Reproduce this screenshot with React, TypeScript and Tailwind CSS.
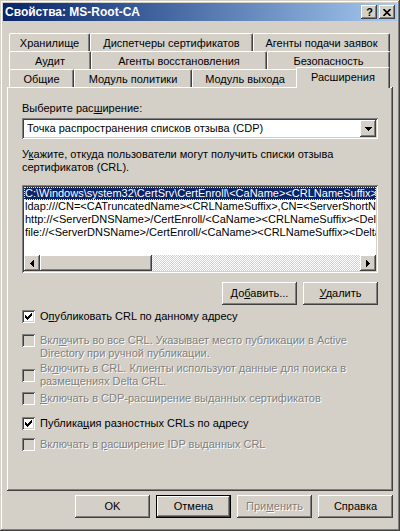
const raised =
  "shadow-[inset_-1px_-1px_0_#404040,inset_1px_1px_0_#ffffff,inset_-2px_-2px_0_#808080,inset_2px_2px_0_#d4d0c8]";
const sunken =
  "shadow-[inset_1px_1px_0_#808080,inset_-1px_-1px_0_#ffffff,inset_2px_2px_0_#404040,inset_-2px_-2px_0_#d4d0c8]";
const disabledText = "text-[#808080] [text-shadow:1px_1px_0_#ffffff]";

function CheckMark() {
  // classic 7x7 check glyph, column by column
  const tops = [2, 3, 4, 3, 2, 1, 0];
  return (
    <svg width="7" height="7" viewBox="0 0 7 7" shapeRendering="crispEdges">
      {tops.map((t, i) => (
        <rect key={i} x={i} y={t} width="1" height="3" fill="#000" />
      ))}
    </svg>
  );
}

function Check({ checked, disabled }: { checked?: boolean; disabled?: boolean }) {
  return (
    <div
      className={`w-[13px] h-[13px] shrink-0 flex items-center justify-center ${sunken} ${
        disabled ? "bg-[#d4d0c8]" : "bg-white"
      }`}
    >
      {checked && <CheckMark />}
    </div>
  );
}

function Button({
  children,
  isDefault,
  disabled,
}: {
  children: React.ReactNode;
  isDefault?: boolean;
  disabled?: boolean;
}) {
  const bevel = isDefault
    ? "shadow-[inset_-1px_-1px_0_#000000,inset_1px_1px_0_#000000,inset_-2px_-2px_0_#404040,inset_2px_2px_0_#ffffff,inset_-3px_-3px_0_#808080]"
    : raised;
  return (
    <div
      className={`w-[75px] h-[23px] flex items-center justify-center bg-[#d4d0c8] ${bevel} ${
        disabled ? disabledText : ""
      }`}
    >
      <span>{children}</span>
    </div>
  );
}

function Tab({ label, w }: { label: string; w: string }) {
  return (
    <div
      className={`${w} h-[18px] shrink-0 border-t border-l border-white border-r border-r-[#404040] rounded-t-[2px] shadow-[inset_-1px_0_0_#808080] pt-[3px] text-center`}
    >
      {label}
    </div>
  );
}

function ArrowLeft() {
  return (
    <svg width="4" height="7" viewBox="0 0 4 7" shapeRendering="crispEdges">
      <path d="M4 0 V7 L0 3.5 Z" fill="#000" />
    </svg>
  );
}

function ArrowRight() {
  return (
    <svg width="4" height="7" viewBox="0 0 4 7" shapeRendering="crispEdges">
      <path d="M0 0 V7 L4 3.5 Z" fill="#000" />
    </svg>
  );
}

function ArrowDown() {
  return (
    <svg width="7" height="4" viewBox="0 0 7 4" shapeRendering="crispEdges">
      <path d="M0 0 H7 L3.5 4 Z" fill="#000" />
    </svg>
  );
}

const paths = [
  "C:\\Windows\\system32\\CertSrv\\CertEnroll\\<CaName><CRLNameSuffix><DeltaCRLAllowed>.crl",
  "ldap:///CN=<CATruncatedName><CRLNameSuffix>,CN=<ServerShortName>,CN=CDP,CN=Public Key Services",
  "http://<ServerDNSName>/CertEnroll/<CaName><CRLNameSuffix><DeltaCRLAllowed>.crl",
  "file://<ServerDNSName>/CertEnroll/<CaName><CRLNameSuffix><DeltaCRLAllowed>.crl",
];

export default function App() {
  return (
    <div className="w-[400px] h-[531px] bg-[#d4d0c8] p-[3px] text-[11px] leading-[13px] text-black font-['Liberation_Sans',Arial,sans-serif] shadow-[inset_-1px_-1px_0_#404040,inset_1px_1px_0_#d4d0c8,inset_-2px_-2px_0_#808080,inset_2px_2px_0_#ffffff] flex flex-col">
      {/* title bar */}
      <div className="h-[18px] bg-linear-to-r from-[#0a246a] to-[#a6caf0] flex items-center pl-[2px] pr-[2px]">
        <span className="text-white font-bold text-[12px]">Свойства: MS-Root-CA</span>
        <div className="ml-auto flex gap-[2px]">
          <div className={`w-[16px] h-[14px] bg-[#d4d0c8] ${raised} flex items-center justify-center`}>
            <span className="font-bold text-[11px] leading-[11px] pl-[1px]">?</span>
          </div>
          <div className={`w-[16px] h-[14px] bg-[#d4d0c8] ${raised} flex items-center justify-center`}>
            <svg width="8" height="7" viewBox="0 0 8 7">
              <path d="M0.5 0 L7.5 7 M7.5 0 L0.5 7" stroke="#000" strokeWidth="1.6" />
            </svg>
          </div>
        </div>
      </div>

      <div className="pl-[4px] pt-[12px]">
        {/* tab rows */}
        <div className="ml-[2px] w-[381px]">
          <div className="flex h-[18px]">
            <Tab label="Хранилище" w="w-[81px]" />
            <Tab label="Диспетчеры сертификатов" w="w-[163px]" />
            <Tab label="Агенты подачи заявок" w="w-[137px]" />
          </div>
          <div className="flex h-[18px]">
            <Tab label="Аудит" w="w-[82px]" />
            <Tab label="Агенты восстановления" w="w-[176px]" />
            <Tab label="Безопасность" w="w-[123px]" />
          </div>
          <div className="flex h-[18px]">
            <Tab label="Общие" w="w-[65px]" />
            <Tab label="Модуль политики" w="w-[118px]" />
            <Tab label="Модуль выхода" w="w-[106px]" />
            <div className="relative z-10 w-[96px] h-[21px] -mt-[2px] -ml-[2px] bg-[#d4d0c8] border-t border-l border-white border-r border-r-[#404040] rounded-t-[2px] shadow-[inset_-1px_0_0_#808080] pt-[3px] text-center">
              Расширения
            </div>
          </div>
        </div>

        {/* page */}
        <div className="w-[386px] h-[404px] shadow-[inset_-1px_-1px_0_#404040,inset_1px_1px_0_#ffffff,inset_-2px_-2px_0_#808080] px-[15px] pt-[15px]">
          <div>
            Выберите рас<span className="underline">ш</span>ирение:
          </div>
          <div className={`mt-[3px] h-[21px] bg-white ${sunken} p-[2px] flex items-center`}>
            <span className="pl-[3px] flex-1">Точка распространения списков отзыва (CDP)</span>
            <div className={`w-[16px] h-[17px] bg-[#d4d0c8] ${raised} flex items-center justify-center`}>
              <ArrowDown />
            </div>
          </div>

          <div className="mt-[9px]">
            У<span className="underline">к</span>ажите, откуда пользователи могут получить списки отзыва
            <br />
            сертификатов (CRL).
          </div>

          <div className={`mt-[11px] h-[88px] bg-white ${sunken} p-[2px] flex flex-col`}>
            <div className="flex-1 overflow-hidden whitespace-nowrap">
              {paths.map((p, i) => (
                <div
                  key={i}
                  className={`h-[13px] pl-[1px] ${
                    i === 0
                      ? "bg-[#0a246a] text-white outline-1 outline-dotted outline-[#f5f0b0] -outline-offset-1"
                      : ""
                  }`}
                >
                  {p}
                </div>
              ))}
            </div>
            <div className="h-[16px] flex">
              <div className={`w-[16px] h-[16px] bg-[#d4d0c8] ${raised} flex items-center justify-center`}>
                <ArrowLeft />
              </div>
              <div className={`w-[112px] h-[16px] bg-[#d4d0c8] ${raised}`} />
              <div className="flex-1 bg-[image:repeating-conic-gradient(#ffffff_0%_25%,#d4d0c8_0%_50%)] bg-[length:2px_2px]" />
              <div className={`w-[16px] h-[16px] bg-[#d4d0c8] ${raised} flex items-center justify-center`}>
                <ArrowRight />
              </div>
            </div>
          </div>

          <div className="mt-[9px] flex justify-end gap-[6px]">
            <Button>
              До<span className="underline">б</span>авить...
            </Button>
            <Button>
              <span className="underline">У</span>далить
            </Button>
          </div>

          <div className="mt-[5px] flex items-start gap-[5px]">
            <Check checked />
            <span>
              О<span className="underline">п</span>убликовать CRL по данному адресу
            </span>
          </div>

          <div className="mt-[11px] flex items-start gap-[5px]">
            <Check disabled />
            <span className={disabledText}>
              Вкл<span className="underline">ю</span>чить во все CRL. Указывает место публикации в Active
              <br />
              Directory при ручной публикации.
            </span>
          </div>

          <div className="mt-[2px] flex items-center gap-[5px]">
            <Check disabled />
            <span className={disabledText}>
              Вк<span className="underline">л</span>ючить в CRL. Клиенты используют данные для поиска в
              <br />
              размещениях Delta CRL.
            </span>
          </div>

          <div className="mt-[4px] flex items-start gap-[5px]">
            <Check disabled />
            <span className={disabledText}>
              <span className="underline">В</span>ключать в CDP-расширение выданных сертификатов
            </span>
          </div>

          <div className="mt-[12px] flex items-start gap-[5px]">
            <Check checked />
            <span>
              Публика<span className="underline">ц</span>ия разностных CRLs по адресу
            </span>
          </div>

          <div className="mt-[8px] flex items-start gap-[5px]">
            <Check disabled />
            <span className={disabledText}>
              Включать в <span className="underline">р</span>асширение IDP выданных CRL
            </span>
          </div>
        </div>

        {/* dialog buttons */}
        <div className="mt-[4px] w-[386px] flex justify-end gap-[6px]">
          <Button>OK</Button>
          <Button isDefault>Отмена</Button>
          <Button disabled>
            При<span className="underline">м</span>енить
          </Button>
          <Button>Справка</Button>
        </div>
      </div>
    </div>
  );
}
